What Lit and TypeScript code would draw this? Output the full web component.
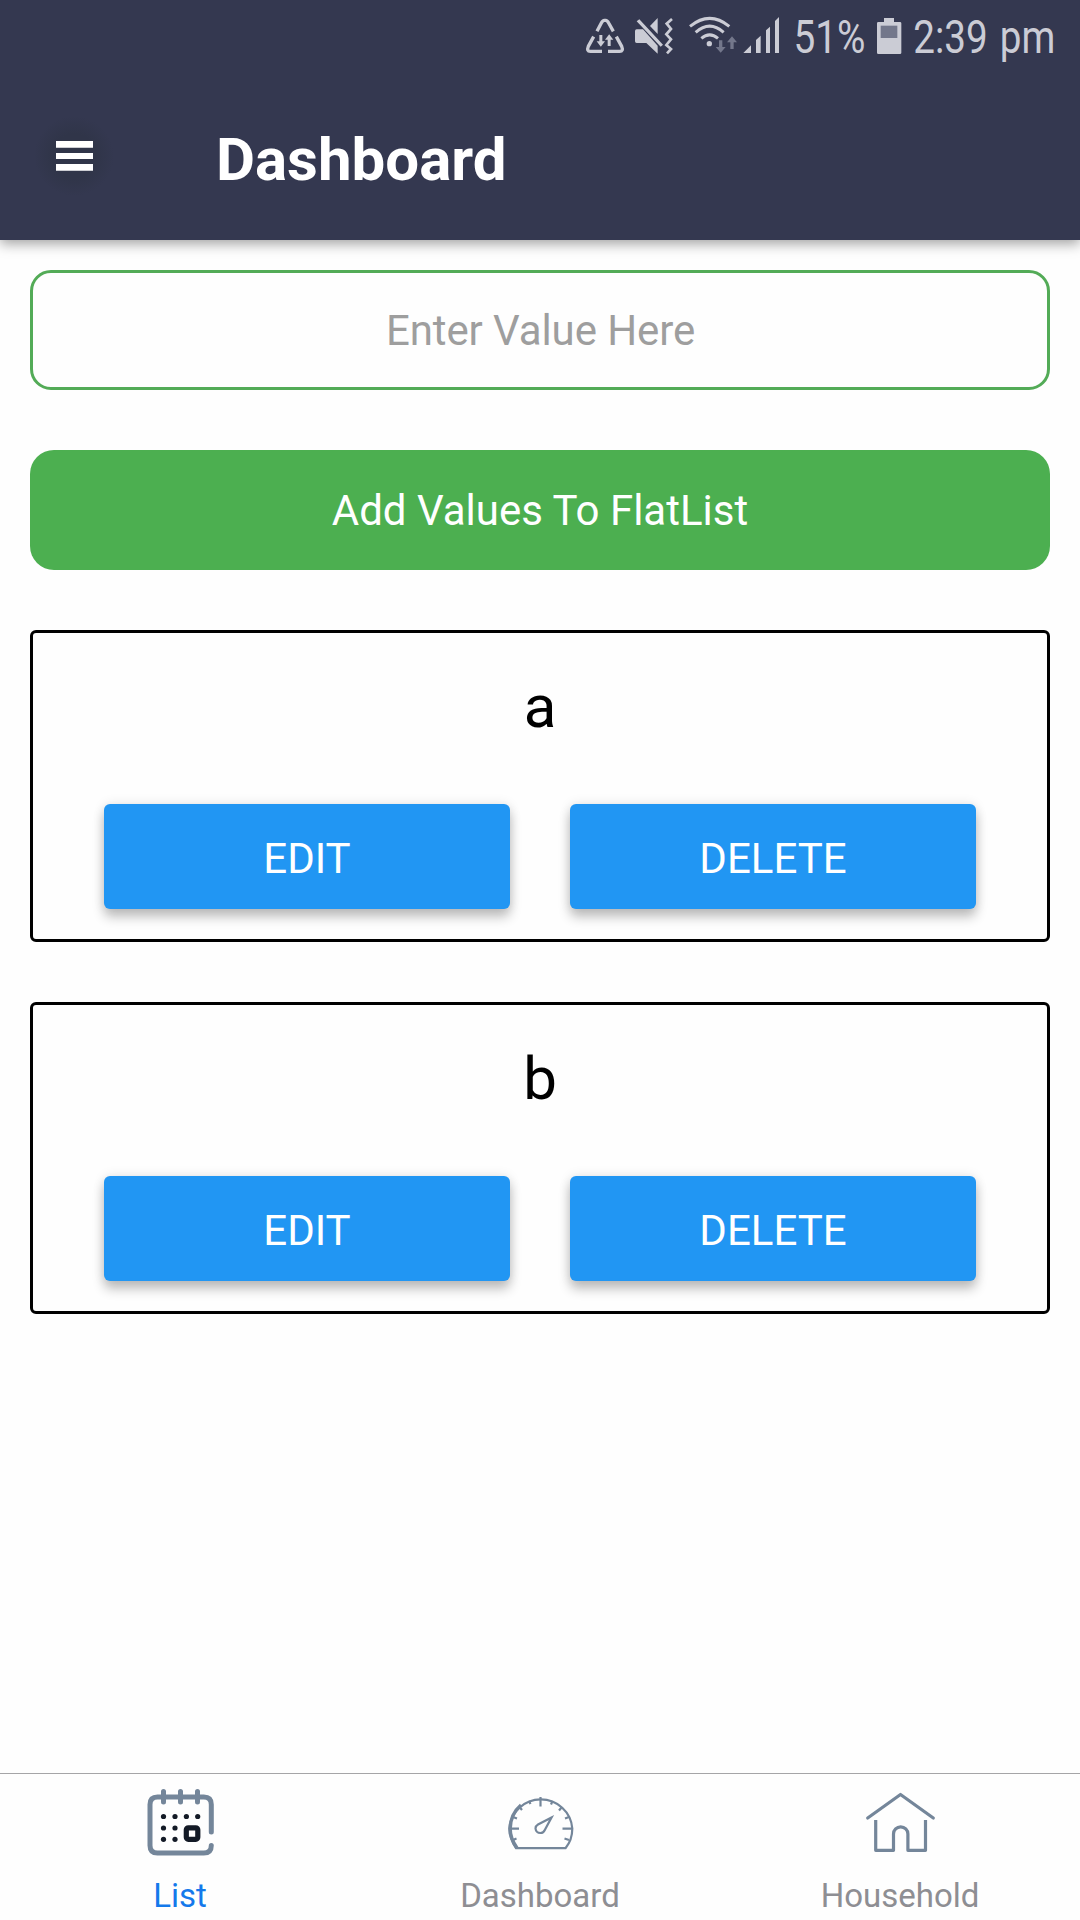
import { LitElement, html, css, svg } from "lit";
import { customElement, property } from "lit/decorators.js";

@customElement("status-bar")
class StatusBar extends LitElement {
  static styles = css`
    :host {
      display: flex;
      justify-content: flex-end;
      height: 72px;
      padding-right: 20px;
      color: #cbccd5;
    }
    svg {
      display: block;
      height: 72px;
      overflow: visible;
      fill: currentColor;
      font-family: Roboto, "Liberation Sans", sans-serif;
    }
    .stroke {
      fill: none;
      stroke: currentColor;
    }
    .dim {
      fill: #73778b;
    }
    .spaced {
      word-spacing: 3px;
    }
  `;

  render() {
    return html`
      <svg width="50" viewBox="45 0 150 216">
        <g class="stroke" stroke-width="10">
          <path d="M81 94L94 69Q98 61 103 61H107Q112 61 116 69L130 94" />
          <path d="M71 110L55 139Q49 154 61 154H96" />
          <path d="M139 110L155 139Q161 154 149 154H114" />
        </g>
        <path d="M88 105h9v19h8L92.500 140 80 124h8zM113 138h9v-19h8L117.500 103 105 119h8z" />
      </svg>
      <svg width="53" viewBox="195 0 159 216">
        <path d="M200 64l8-6 71 76-7 6zM200 88h19l44 49v24L229 129h-29q-5 0-5-5V93q0-5 5-5zM240 78l23-24v48z" />
        <path class="stroke" stroke-width="8" d="M306 57L290 71L303 87L289 103L303 118L289 135L303 147L291 160" />
      </svg>
      <svg width="55" viewBox="354 0 165 216">
        <g class="stroke" stroke-width="9">
          <path d="M360 79Q419 31 478 79" />
          <path d="M377 97Q419 60 461 97" />
          <path d="M394 115Q419 94 444 115" />
        </g>
        <circle cx="418" cy="131" r="8" />
        <path class="dim" d="M447 121h10v20h10L452 158 437 141h10zM481 147h10v-20h10L486 109 471 127h10z" />
      </svg>
      <svg width="46" viewBox="519 0 138 216">
        <path d="M520 159L543 136V159zM558 159V120L572 107V159zM588 159V91L600 80V159zM615 159V63L627 51V159z" />
      </svg>
      <svg width="84" viewBox="789 0 84 72">
        <text x="793.500" y="53" font-size="46" textLength="72" lengthAdjust="spacingAndGlyphs">51%</text>
      </svg>
      <svg width="33" viewBox="279 0 99 216">
        <path d="M312 54h30v12h18q4 0 4 4v88q0 4-4 4h-65q-4 0-4-4V70q0-4 4-4h17z" />
        <path class="dim" d="M302 77h50v37h-50z" />
      </svg>
      <svg width="154" viewBox="906 0 154 72">
        <text class="spaced" x="913.300" y="53" font-size="46" textLength="142" lengthAdjust="spacingAndGlyphs">2:39 pm</text>
      </svg>
    `;
  }
}

@customElement("list-card")
class ListCard extends LitElement {
  @property() label = "";

  static styles = css`
    :host {
      display: flex;
      flex-direction: column;
      box-sizing: border-box;
      height: 312px;
      padding: 26px 71px 30px;
      border: 3px solid #000;
      border-radius: 6px;
    }
    .label {
      flex: 1;
      font-size: 60px;
      line-height: 96px;
      text-align: center;
      color: #000;
    }
    .actions {
      display: grid;
      grid-template-columns: 1fr 1fr;
      gap: 60px;
    }
    .action {
      height: 105px;
      padding: 3px 0 0;
      border: 0;
      border-radius: 6px;
      background: #2196f3;
      box-shadow: 0 8px 12px rgba(0, 0, 0, 0.24), 0 0 12px rgba(0, 0, 0, 0.1);
      color: #fff;
      font: 42px Roboto, "Liberation Sans", sans-serif;
    }
  `;

  render() {
    return html`
      <div class="label">${this.label}</div>
      <div class="actions">
        <button class="action">EDIT</button>
        <button class="action">DELETE</button>
      </div>
    `;
  }
}

const listIcon = svg`
  <g fill="none" stroke="#74869a" stroke-width="5" stroke-linecap="round">
    <path d="M91.300 72V44.500q0-7.500-7.500-7.500H37.500Q30 37 30 44.500V85.500Q30 93 37.500 93H83.800Q91.300 93 91.300 85.500" />
    <path d="M43.500 31.500V42M60.500 31.500V42M77.500 31.500V42" />
  </g>
  <g fill="#131a26">
    <circle cx="43.500" cy="56.500" r="2.600" /><circle cx="55" cy="56.500" r="2.600" />
    <circle cx="66.400" cy="56.500" r="2.600" /><circle cx="77.700" cy="56.500" r="2.600" />
    <circle cx="43.500" cy="68" r="2.600" /><circle cx="55" cy="68" r="2.600" />
    <circle cx="43.500" cy="79.300" r="2.600" /><circle cx="55" cy="79.300" r="2.600" />
  </g>
  <rect x="66.300" y="67.800" width="11.500" height="11.500" rx="2" fill="none" stroke="#131a26" stroke-width="5.200" />`;

const gaugeIcon = svg`
  <g fill="none" stroke="#74869a" stroke-width="2.200">
    <path d="M36 88.200H85.500Q92.300 80 92.300 68.500A31.600 31.600 0 0 0 29.300 68.500Q29.300 78 36 88.200z" />
    <path stroke-width="3.400" d="M37 88Q30 78 30.200 68.500Q30.500 54 41 45" />
    <path d="M60.500 37V46.500M29 68.700H39M82.500 68.700H92M49 41L50.500 44M72.500 41L71 44.500M39.500 47L42 50M82 47L79 50.500M33 57L37 58.500M89 57L85 58.500M33 80L36.500 78.500M89 80L84.500 78.500" />
    <path d="M71.500 57.500L58 64.500Q55.500 66 55.500 68.500Q56 73 60.500 73Q63.500 73 64.800 70z" />
  </g>`;

const houseIcon = svg`
  <g fill="none" stroke="#74869a" stroke-width="3.200" stroke-linecap="round" stroke-linejoin="round">
    <path d="M27.700 58L60.500 34.500L93.300 58" />
    <path stroke-linecap="butt" d="M35.700 60V90.300H53.500V74A7.200 7.200 0 0 1 67.900 74V90.300H85.500V60" />
  </g>`;

@customElement("app-root")
class AppRoot extends LitElement {
  static styles = css`
    :host {
      display: flex;
      flex-direction: column;
      height: 1920px;
      overflow: hidden;
      background: #fefefe;
      font-family: Roboto, "Liberation Sans", sans-serif;
    }
    .header {
      height: 240px;
      flex: none;
      background: #343850;
      box-shadow: 0 4px 12px rgba(0, 0, 0, 0.36);
    }
    .toolbar {
      display: flex;
      align-items: center;
      height: 168px;
      padding-left: 34px;
    }
    .menu {
      display: flex;
      align-items: center;
      justify-content: center;
      width: 80px;
      height: 80px;
      border-radius: 40px;
      background: radial-gradient(circle closest-side, #303549 55%, #343850 100%);
    }
    .menu svg {
      display: block;
      width: 37px;
      height: 30px;
      fill: #fff;
    }
    .title {
      margin: 8px 0 0 102px;
      font-size: 60px;
      font-weight: 700;
      line-height: 70px;
      color: #fff;
    }
    .content {
      flex: 1;
      display: flex;
      flex-direction: column;
      gap: 60px;
      padding: 30px 30px 0;
    }
    .field {
      box-sizing: border-box;
      width: 100%;
      height: 120px;
      margin: 0;
      padding: 0 0 0 1px;
      border: 3px solid #53ab57;
      border-radius: 21px;
      background: none;
      text-align: center;
      font: 42px Roboto, "Liberation Sans", sans-serif;
      letter-spacing: -0.1px;
    }
    .field::placeholder {
      color: #9e9e9e;
      opacity: 1;
    }
    .add {
      height: 120px;
      padding: 0;
      border: 0;
      border-radius: 24px;
      background: #4caf50;
      color: #fff;
      font: 42px Roboto, "Liberation Sans", sans-serif;
    }
    .tabs {
      display: grid;
      grid-template-columns: repeat(3, 1fr);
      height: 147px;
      flex: none;
      box-sizing: border-box;
      border-top: 1px solid #a5a5a7;
    }
    .tab {
      display: flex;
      flex-direction: column;
      align-items: center;
      color: #8e8e93;
      font-size: 33px;
      line-height: 40px;
    }
    .tab svg {
      width: 120px;
      height: 88px;
      margin-bottom: 14px;
    }
    .active {
      color: #1479eb;
    }
  `;

  private items = ["a", "b"];
  private tabs = [
    { name: "List", icon: listIcon },
    { name: "Dashboard", icon: gaugeIcon },
    { name: "Household", icon: houseIcon },
  ];

  render() {
    return html`
      <header class="header">
        <status-bar></status-bar>
        <div class="toolbar">
          <div class="menu">
            <svg viewBox="0 0 37 30">
              <path d="M0 0h37v6.700H0zM0 12h37v6H0zM0 23h37v6.700H0z" />
            </svg>
          </div>
          <div class="title">Dashboard</div>
        </div>
      </header>
      <main class="content">
        <input class="field" placeholder="Enter Value Here" />
        <button class="add">Add Values To FlatList</button>
        ${this.items.map((item) => html`<list-card .label=${item}></list-card>`)}
      </main>
      <nav class="tabs">
        ${this.tabs.map(
          (tab, i) => html`
            <div class="tab ${i === 0 ? "active" : ""}">
              <svg viewBox="0 14 120 88">${tab.icon}</svg>
              <span>${tab.name}</span>
            </div>
          `,
        )}
      </nav>
    `;
  }
}
